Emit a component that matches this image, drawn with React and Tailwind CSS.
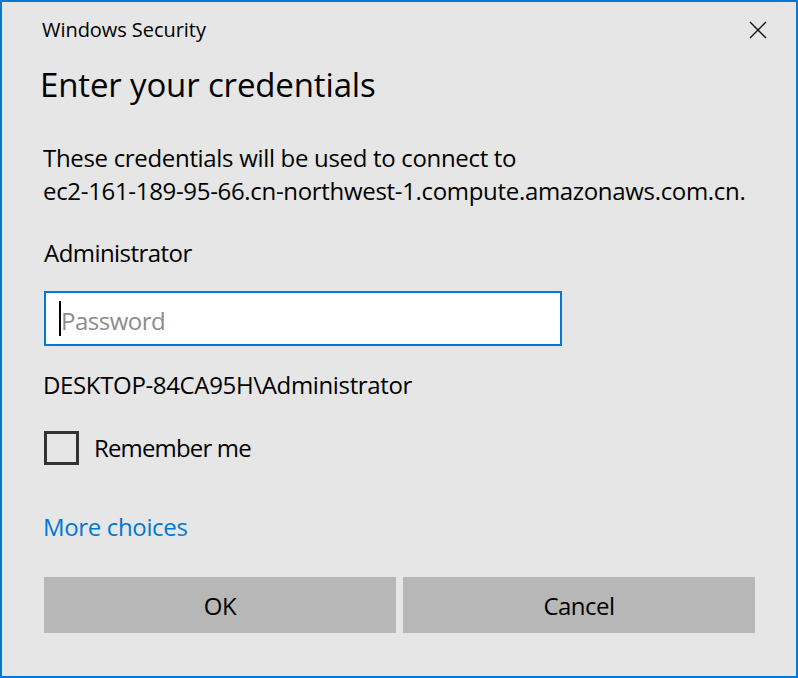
const App = () => {
  return (
    <div
      className="w-[798px] h-[678px] border-2 border-[#0078d7] bg-[#e6e6e6] text-black"
      style={{ fontFamily: '"Open Sans", "Noto Sans", sans-serif' }}
    >
      <div className="flex justify-between items-start pl-[40px] pr-[29px] pt-[14px]">
        <div className="text-[20px] leading-[28px] tracking-[-0.05px]">Windows Security</div>
        <svg className="mt-[5px]" width="18" height="18" viewBox="0 0 18 18">
          <path d="M1 1 L17 17 M17 1 L1 17" stroke="#111" strokeWidth="1.4" fill="none" />
        </svg>
      </div>

      <div className="pl-[41px] pr-[30px]">
        <h1 className="-ml-[3px] mt-[19px] text-[33px] leading-[44px] tracking-[-0.15px]">
          Enter your credentials
        </h1>

        <p className="mt-[34px] text-[24px] leading-[33px] tracking-[-0.32px]">
          These credentials will be used to connect to
          <br />
          ec2-161-189-95-66.cn-northwest-1.compute.amazonaws.com.cn.
        </p>

        <div className="mt-[29px] text-[24px] leading-[33px] tracking-[-0.55px] ml-[1px]">Administrator</div>

        <div className="mt-[22px] ml-[1px] w-[518px] h-[55px] border-2 border-[#0078d7] bg-white flex items-center pl-[13px]">
          <span className="w-[2px] h-[35px] bg-black" />
          <span className="pt-[3px] text-[24px] leading-[33px] tracking-[-0.5px] text-[#8c8c8c]">Password</span>
        </div>

        <div className="mt-[22px] text-[24px] leading-[33px] tracking-[-0.35px]">DESKTOP-84CA95H\Administrator</div>

        <div className="mt-[30px] ml-[1px] flex items-center gap-[15px]">
          <div className="w-[35px] h-[34px] border-[3px] border-[#333333]" />
          <span className="-mt-[2px] text-[24px] leading-[33px] tracking-[-0.85px]">Remember me</span>
        </div>

        <div className="mt-[45px] text-[24px] leading-[33px] tracking-[-0.35px] text-[#0078d7]">More choices</div>

        <div className="mt-[34px] ml-[1px] flex gap-[7px]">
          <button className="w-[352px] h-[56px] bg-[#b7b7b7] text-[24px] tracking-[-0.5px] pt-[2px]">OK</button>
          <button className="w-[352px] h-[56px] bg-[#b7b7b7] text-[24px] tracking-[-0.5px] pt-[2px]">Cancel</button>
        </div>
      </div>
    </div>
  )
}

export default App
